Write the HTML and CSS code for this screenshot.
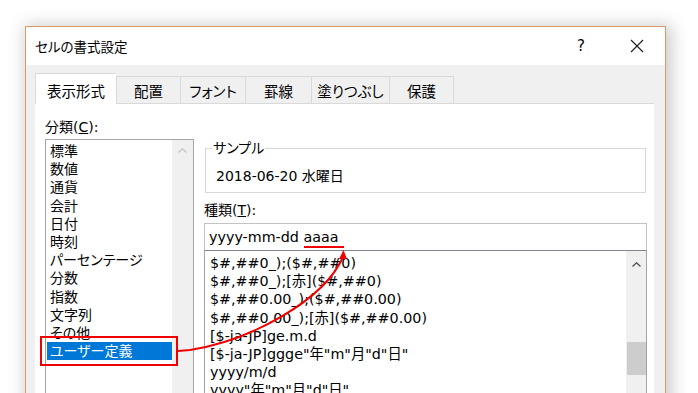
FILE: index.html
```html
<!DOCTYPE html>
<html lang="ja">
<head>
    <meta charset="UTF-8">
    <meta name="viewport" content="width=device-width, initial-scale=1.0">
    <title>セルの書式設定</title>
    <link rel="stylesheet" href="styles.css">
</head>
<body>

<div class="page">
    <div class="dialog">
        <div class="titlebar">
            <span class="title">セルの書式設定</span>
            <div class="title-buttons">
                <span class="tb-btn help">?</span>
                <span class="tb-btn">
                    <svg width="14" height="14" viewBox="0 0 14 14"><path d="M1 1L13 13M13 1L1 13" stroke="#1a1a1a" stroke-width="1.1"/></svg>
                </span>
            </div>
        </div>

        <div class="tabs">
            <div class="tab tab-active">表示形式</div>
            <div class="tab">配置</div>
            <div class="tab">フォント</div>
            <div class="tab">罫線</div>
            <div class="tab">塗りつぶし</div>
            <div class="tab tab-last">保護</div>
        </div>

        <div class="panel">
            <div class="col-left">
                <div class="label">分類(<u>C</u>):</div>
                <div class="listbox category">
                    <ul class="items">
                        <li>標準</li>
                        <li>数値</li>
                        <li>通貨</li>
                        <li>会計</li>
                        <li>日付</li>
                        <li>時刻</li>
                        <li>パーセンテージ</li>
                        <li>分数</li>
                        <li>指数</li>
                        <li>文字列</li>
                        <li>その他</li>
                        <li class="selected">ユーザー定義</li>
                    </ul>
                    <div class="scrollbar scrollbar-off">
                        <svg class="chevron" width="9" height="5" viewBox="0 0 9 5"><path d="M0.5 4.5L4.5 0.8L8.5 4.5" fill="none" stroke="#c4c4c4" stroke-width="1.3"/></svg>
                    </div>
                </div>
            </div>

            <div class="col-right">
                <fieldset class="sample">
                    <legend>サンプル</legend>
                    <div class="sample-text">2018-06-20 水曜日</div>
                </fieldset>

                <div class="label kind-label">種類(<u>T</u>):</div>
                <div class="format-input">yyyy-mm-dd aaaa</div>

                <div class="listbox formats">
                    <ul class="items">
                        <li>$#,##0_);($#,##0)</li>
                        <li>$#,##0_);[赤]($#,##0)</li>
                        <li>$#,##0.00_);($#,##0.00)</li>
                        <li>$#,##0.00_);[赤]($#,##0.00)</li>
                        <li>[$-ja-JP]ge.m.d</li>
                        <li>[$-ja-JP]ggge"年"m"月"d"日"</li>
                        <li>yyyy/m/d</li>
                        <li>yyyy"年"m"月"d"日"</li>
                    </ul>
                    <div class="scrollbar">
                        <svg class="chevron" width="9" height="5" viewBox="0 0 9 5"><path d="M0.5 4.5L4.5 0.8L8.5 4.5" fill="none" stroke="#505050" stroke-width="1.3"/></svg>
                        <div class="thumb"></div>
                    </div>
                </div>
            </div>
        </div>
    </div>
</div>

<!-- red callout drawn over the dialog -->
<svg class="annotation" width="698" height="393" viewBox="0 0 698 393">
    <rect x="41" y="337" width="136" height="28" fill="none" stroke="#f00000" stroke-width="2"/>
    <line x1="304" y1="247" x2="344" y2="247" stroke="#f00000" stroke-width="2"/>
    <path d="M178 351 L190 350 C 252 340, 324 300, 343 257" fill="none" stroke="#f00000" stroke-width="2"/>
    <polygon points="339,259 343.5,250 347,259" fill="#f00000"/>
</svg>

</body>
</html>
```

FILE: styles.css
```css
body {
    margin: 0;
    background: #fff;
    font-family: "DejaVu Sans", "Noto Sans CJK JP", sans-serif;
    font-size: 14px;
    font-feature-settings: "palt";
    color: #000;
    overflow: hidden;
    height: 393px;
}
.page {
    padding: 26px 0 0 25px;
}
.dialog {
    width: 639px;
    height: 430px;
    border: 1px solid #d89a6a;
    background: #f0f0f0;
    box-shadow: 3px 2px 16px 3px rgba(0,0,0,0.2);
}
.titlebar {
    height: 38px;
    background: #fff;
    display: flex;
    align-items: center;
    justify-content: space-between;
    padding-left: 9px;
}
.title {
    font-size: 13.5px;
    font-family: "Noto Sans CJK JP", sans-serif;
}
.title-buttons {
    display: flex;
}
.tb-btn {
    width: 56px;
    height: 38px;
    display: flex;
    align-items: center;
    justify-content: center;
}
.help {
    font-size: 15px;
}
.tabs {
    display: grid;
    grid-template-columns: 81px 64px 65px 66px 78px 65px;
    align-items: end;
    height: 30px;
    margin: 8px 0 0 9px;
}
.tab {
    height: 27px;
    box-sizing: border-box;
    border-top: 1px solid #d9d9d9;
    border-left: 1px solid #d9d9d9;
    display: flex;
    align-items: center;
    justify-content: center;
    font-size: 14.5px;
    font-family: "Noto Sans CJK JP", sans-serif;
}
.tab-last {
    border-right: 1px solid #d9d9d9;
}
.tab-active {
    height: 31px;
    margin-bottom: -1px;
    padding-top: 3px;
    background: #fff;
    position: relative;
}
.panel {
    background: #fff;
    border-top: 1px solid #d9d9d9;
    margin: 0 11px 0 9px;
    height: 320px;
    padding: 14px 7px 0 10px;
    display: grid;
    grid-template-columns: 149px 443px;
    column-gap: 10px;
    align-content: start;
}
.label {
    line-height: 18px;
}
.listbox {
    display: flex;
    border: 1px solid #a5a5a5;
    background: #fff;
}
.category {
    margin-top: 3px;
    height: 270px;
}
.items {
    list-style: none;
    margin: 0;
    padding: 2px 0 0 0;
    flex: 1;
}
.items li {
    line-height: 18.2px;
    height: 18.2px;
    padding-left: 3px;
    margin-left: 1px;
    white-space: nowrap;
}
.items li.selected {
    background: #0078d7;
    color: #fff;
}
.scrollbar {
    width: 20px;
    background: #f0f0f0;
    display: flex;
    flex-direction: column;
    align-items: center;
}
.scrollbar-off {
    width: 21px;
}
.category .chevron {
    margin-top: 8px;
}
.formats .chevron {
    margin-top: 11px;
}
.thumb {
    width: 19px;
    height: 33px;
    margin-top: 75px;
    background: #cdcdcd;
}
.sample {
    margin: 21px 1px 0;
    padding: 0 0 7px 6px;
    border: 1px solid #d8d8d8;
}
.sample legend {
    padding: 0 1px;
    line-height: 18px;
}
.sample-text {
    margin: 10px 0 0 4px;
    line-height: 18px;
}
.kind-label {
    margin-top: 8px;
}
.format-input {
    margin-top: 4px;
    height: 27px;
    box-sizing: border-box;
    border: 1px solid #c3c3c3;
    border-bottom: 0;
    line-height: 26px;
    padding-left: 4px;
    font-size: 14.3px;
}
.formats {
    height: 200px;
    border-top-color: #7f8490;
}
.formats .items {
    padding: 3px 0 0 1px;
    font-size: 14.3px;
}
.annotation {
    position: absolute;
    top: 0;
    left: 0;
    pointer-events: none;
}
```
